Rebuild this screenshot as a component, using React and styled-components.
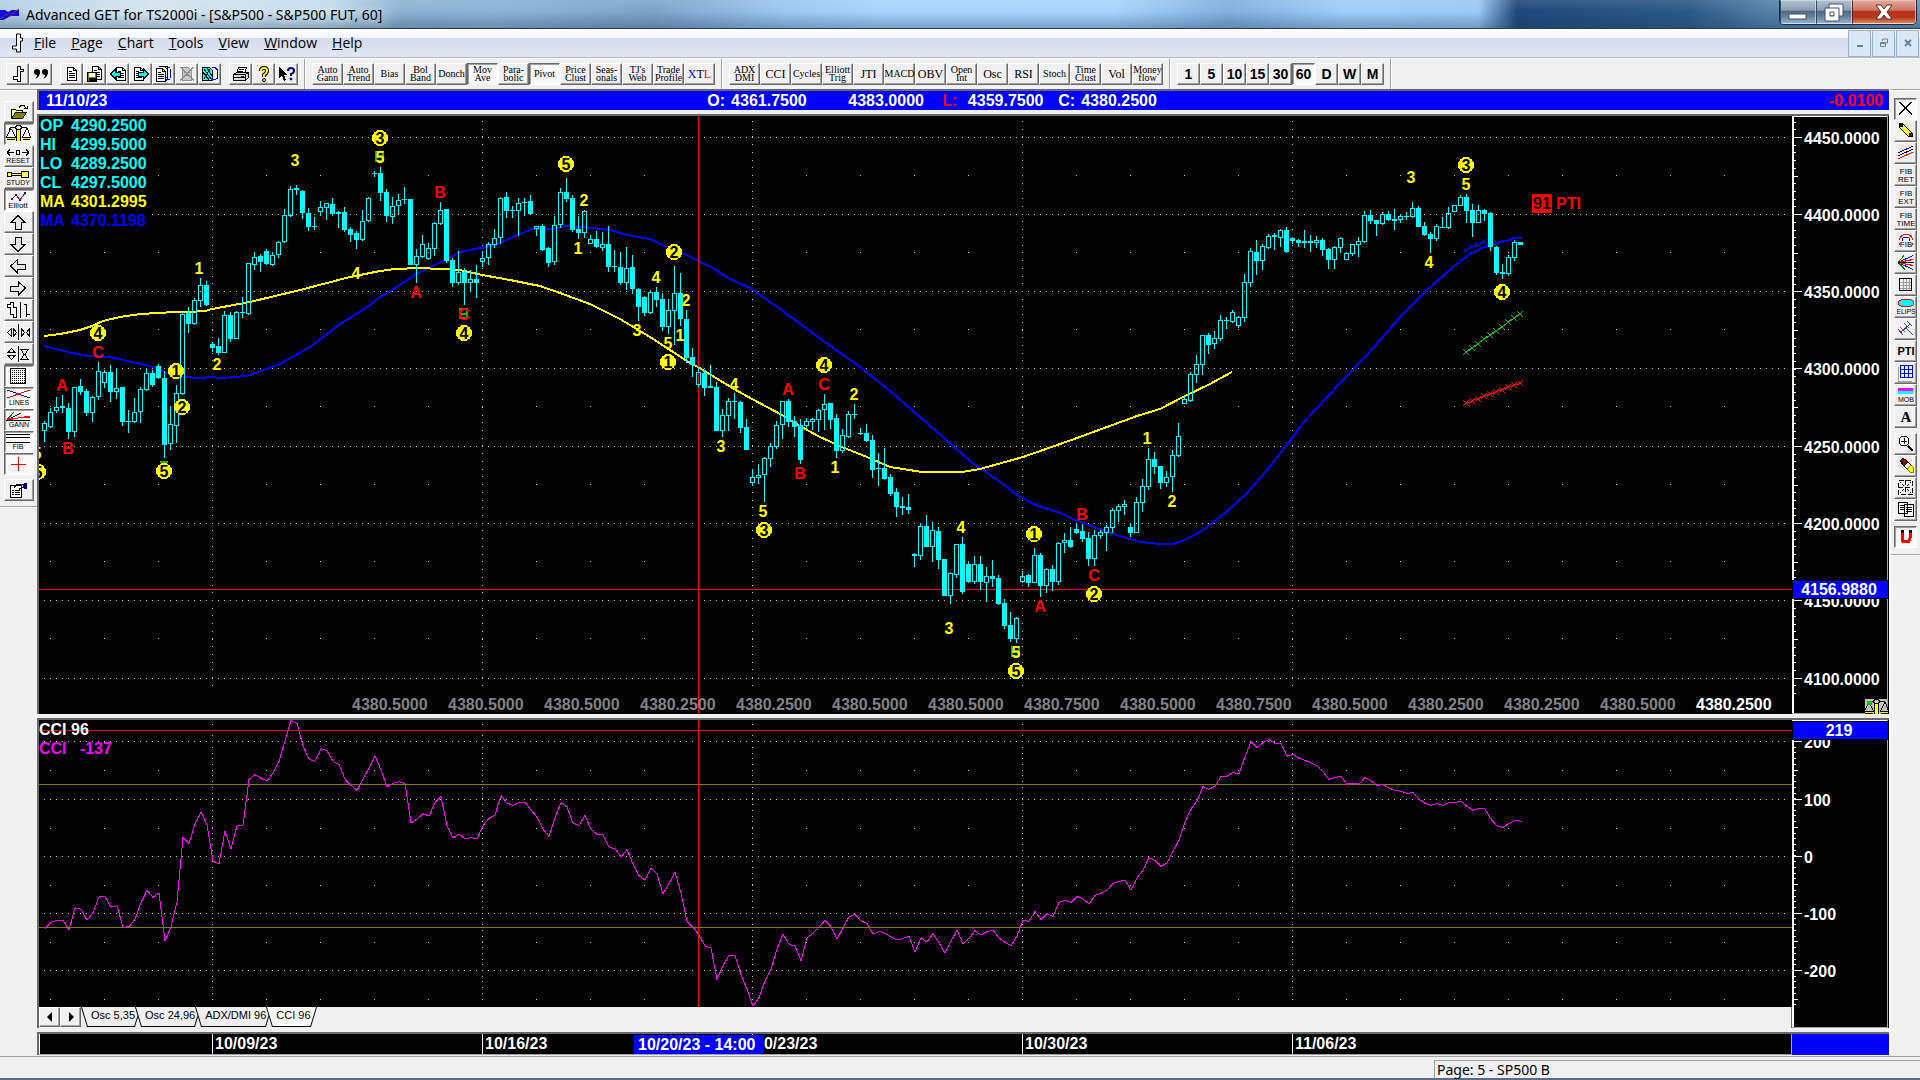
import React from 'react';
import styled, { createGlobalStyle, css } from 'styled-components';

const GlobalStyle = createGlobalStyle`
  * {
    box-sizing: border-box;
  }

  body {
    margin: 0;
    background: #f0f0f0;
    font-family: 'Open Sans', 'Noto Sans', sans-serif;
    color: #000;
  }

  button {
    font: inherit;
    color: inherit;
    margin: 0;
    padding: 0;
    border: 0;
    background: none;
  }
`;

const Page = styled.div`
  display: flex;
  flex-direction: column;
  min-height: 100vh;
  overflow: hidden;
`;

/* ---------- title bar ---------- */

const TitleBar = styled.header`
  display: flex;
  align-items: flex-start;
  height: 29px;
  border-bottom: 1px solid #2b3a4e;
  background:
    linear-gradient(180deg, rgba(255, 255, 255, 0.1) 0%, rgba(255, 255, 255, 0) 40%, rgba(20, 50, 90, 0.3) 100%),
    linear-gradient(
      90deg,
      #b4cfe4 0%,
      #d3e3ee 8%,
      #c4dbec 17%,
      #8fb2d0 21%,
      #8db4d8 26%,
      #7ea3c8 34%,
      #9cc8f2 41%,
      #a8d4fe 46%,
      #a8d4fe 58%,
      #7fb0de 64%,
      #a0cdfa 70%,
      #9cc9f6 77%,
      #20497a 79%,
      #2c5a88 88%,
      #5580a8 92%,
      #6d93b8 100%
    );
`;

const AppLogo = styled.svg`
  width: 20px;
  height: 16px;
  margin: 6px 6px 0 0;
`;

const TitleText = styled.h1`
  flex: 1;
  margin: 0;
  font-family: 'Noto Sans', 'Open Sans', sans-serif;
  font-size: 14px;
  font-weight: 400;
  line-height: 29px;
  white-space: nowrap;
  text-shadow: 0 0 8px #fff;
`;

const WindowButtons = styled.div`
  display: flex;
  height: 25px;
  margin-right: 3px;
  border: 1px solid #1d2c40;
  border-top: 0;
  border-radius: 0 0 5px 5px;
  overflow: hidden;
`;

const WindowButton = styled.button`
  display: flex;
  align-items: center;
  justify-content: center;
  width: ${(p) => (p.$close ? '64px' : '36px')};
  height: 24px;
  border: 1px solid rgba(255, 255, 255, 0.5);
  border-left-color: ${(p) => (p.$close ? '#5b2018' : '#33475e')};
  background: ${(p) =>
    p.$close
      ? 'linear-gradient(180deg, #dfa79b 0%, #cf7565 42%, #b8301a 46%, #b53a1e 75%, #d98559 100%)'
      : 'linear-gradient(180deg, #b3bfcc 0%, #8c9cb0 42%, #51677f 46%, #6b87a5 75%, #93b2d0 100%)'};
`;

/* ---------- menu ---------- */

const MenuBar = styled.nav`
  display: flex;
  align-items: center;
  height: 29px;
  padding-left: 11px;
  border-bottom: 1px solid #b4b8c4;
  background: linear-gradient(180deg, #fff 0%, #f2f4fa 32%, #d5dbec 34%, #e3e7f5 100%);
`;

const MenuIcon = styled.svg`
  width: 12px;
  height: 20px;
  margin-right: 3px;
`;

const MenuItem = styled.button`
  padding: 0 7px 0 8px;
  font-size: 14px;
  line-height: 28px;

  &::first-letter {
    text-decoration: underline;
  }
`;

const MdiButtons = styled.div`
  display: flex;
  gap: 1px;
  margin-left: auto;
  margin-right: 1px;
`;

const MdiButton = styled.button`
  display: flex;
  align-items: center;
  justify-content: center;
  width: 23px;
  height: 27px;
  border: 1px solid #9fb3c8;
  background: #dbe9f6;
`;

/* ---------- toolbars ---------- */

const TopToolbar = styled.div`
  display: flex;
  height: 31px;
  border-top: 1px solid #fff;
  background: #f0f0f0;
`;

const ToolGroup = styled.div`
  display: flex;
  align-items: center;
  margin-right: 1px;
  padding: 0 6px;
  border-right: 1px solid #a0a0a0;
  box-shadow: 1px 0 0 #fff;
`;

const ToolGap = styled.span`
  width: 8px;
  height: 4px;
`;

const raised = css`
  border: 1px solid;
  border-color: #fff #696969 #696969 #fff;
  box-shadow: inset -1px -1px 0 #a0a0a0;
  background: #f0f0f0;
`;

const pressed = css`
  border: 1px solid;
  border-color: #696969 #fff #fff #696969;
  box-shadow: inset 1px 1px 0 #a0a0a0;
  background: #f9f9f9;
`;

const ToolButton = styled.button`
  display: flex;
  flex-direction: column;
  align-items: center;
  justify-content: center;
  width: ${(p) => p.$width || 23}px;
  height: 22px;
  white-space: nowrap;
  ${(p) => (p.$pressed ? pressed : raised)}

  svg {
    display: block;
    flex: none;
  }
`;

const StudyLabel = styled.span`
  font-family: 'Liberation Serif', serif;
  font-size: ${(p) => (p.$small ? 10 : 12)}px;
  line-height: ${(p) => (p.$stacked ? 8 : 12)}px;
  text-align: center;
`;

const PeriodLabel = styled.span`
  font-family: 'Liberation Sans', sans-serif;
  font-size: 14px;
  font-weight: 700;
  line-height: 18px;
`;

const Tint = styled.span`
  color: ${(p) => p.$color};
`;

const Body = styled.main`
  display: flex;
  flex: 1;
`;

const SideBar = styled.aside`
  display: flex;
  flex-direction: column;
  flex: none;
  align-items: center;
  width: ${(p) => (p.$right ? 29 : 37)}px;
  padding-top: ${(p) => (p.$right ? 8 : 11)}px;
  border-top: 1px solid #a0a0a0;
  box-shadow: inset 0 1px 0 #fff;
`;

const SideGroup = styled.div`
  display: flex;
  flex-direction: column;
  margin-bottom: ${(p) => (p.$gap ? 5 : 4)}px;
`;

const SideEnd = styled.hr`
  width: 100%;
  margin: 1px 0 0;
  border: 0;
  border-top: 1px solid #a0a0a0;
  border-bottom: 1px solid #fff;
`;

/* ---------- chart area ---------- */

const Workspace = styled.section`
  display: flex;
  flex: 1;
  flex-direction: column;
  gap: 4px;
  min-width: 0;
  border-right: 2px solid #fff;
  font-family: 'Liberation Sans', sans-serif;
  font-size: 16px;
  font-weight: 700;
`;

const sunken = css`
  border-top: 2px solid #696969;
  border-left: 2px solid #696969;
`;

const InfoBar = styled.div`
  ${sunken}
  display: flex;
  height: 21px;
  padding: 0 6px 0 7px;
  background: #0000ff;
  color: #fff;
  line-height: 19px;
  white-space: nowrap;
`;

const InfoDate = styled.span`
  flex: 0 0 36%;
`;

const Quote = styled.span`
  display: flex;
  gap: 6px;
  width: ${(p) => p.$width}px;
`;

const Change = styled.span`
  margin-left: auto;
  color: #ff0000;
`;

const Pane = styled.div`
  ${sunken}
  display: flex;
  background: #000;
`;

const Plot = styled.div`
  position: relative;
  flex: 1;
  min-width: 0;
  overflow: hidden;
`;

const PlotSvg = styled.svg`
  display: block;
  width: 100%;
  height: ${(p) => p.$height}px;
`;

const Axis = styled.svg`
  flex: none;
  width: 97px;
  height: ${(p) => p.$height}px;
`;

const Legend = styled.dl`
  position: absolute;
  top: 0;
  left: 1px;
  display: grid;
  grid-template-columns: 31px auto;
  margin: 0;
  padding-right: 4px;
  background: #000;
  line-height: 19px;
`;

const LegendName = styled.dt`
  color: ${(p) => p.$color};
`;

const LegendValue = styled.dd`
  margin: 0;
  color: ${(p) => p.$color};
`;

const CciLegend = styled.div`
  position: absolute;
  top: 0;
  left: 0;
  line-height: 19px;
  white-space: pre;
`;

const Tape = styled.div`
  position: absolute;
  right: 20px;
  bottom: 0;
  display: flex;
  gap: 20px;
  line-height: 19px;
  color: #848284;
`;

const TapePrice = styled.span`
  width: 76px;
  color: ${(p) => (p.$last ? '#fff' : 'inherit')};
`;

const TabStrip = styled.div`
  display: flex;
  height: 21px;
  border-right: 1px solid #696969;
  background: #f0f0f0;
  font-size: 11px;
  font-weight: 400;
`;

const ScrollButton = styled.button`
  display: flex;
  align-items: center;
  justify-content: center;
  width: 21px;
  height: 20px;
  ${raised}
`;

const Tabs = styled.div`
  display: flex;
`;

const Tab = styled.button`
  position: relative;
  z-index: 0;
  height: 20px;
  padding: 0 6px 4px 10px;
  margin-right: -6px;
  white-space: nowrap;

  &::before,
  &::after {
    content: '';
    position: absolute;
    z-index: -1;
    top: 0;
    bottom: 0;
    border-bottom: 1px solid #000;
    background: ${(p) => (p.$active ? '#fff' : '#f0f0f0')};
  }

  &::before {
    left: 3px;
    right: 50%;
    border-left: 1px solid #000;
    transform: skewX(17deg);
  }

  &::after {
    left: 35%;
    right: 3px;
    border-right: 1px solid #000;
    transform: skewX(-17deg);
  }
`;

const DateBar = styled.div`
  ${sunken}
  display: flex;
  height: 23px;
  background: #000;
  color: #fff;
`;

const DateTrack = styled.div`
  position: relative;
  display: flex;
  flex: 1;
  overflow: hidden;
  border-left: 1px solid #fff;
  border-right: 1px solid #a0a0a0;
  border-bottom: 1px solid #a0a0a0;
  line-height: 20px;
`;

const DateCell = styled.span`
  flex: none;
  width: ${(p) => (p.$lead ? 172 : 270)}px;
  padding-left: 2px;
  border-left: ${(p) => (p.$lead ? '0' : '1px solid #fff')};
`;

const DateCursor = styled.span`
  position: absolute;
  left: 594px;
  top: 1px;
  width: 130px;
  padding-left: 4px;
  background: #0000ff;
  line-height: 19px;
`;

const DateCorner = styled.div`
  width: 97px;
  background: #0000ff;
`;

const StatusBar = styled.footer`
  display: flex;
  justify-content: flex-end;
  height: 24px;
  padding-top: 3px;
  border-top: 1px solid #a0a0a0;
  border-bottom: 2px solid #5b6c88;
  background: #f0f0f0;
`;

const StatusCell = styled.div`
  width: 486px;
  padding-left: 2px;
  border-top: 1px solid #a0a0a0;
  border-left: 1px solid #a0a0a0;
  font-family: 'Noto Sans', 'Open Sans', sans-serif;
  font-size: 14px;
  line-height: 18px;
`;

/* ---------- data ---------- */

const FIRST_X = 44;
const BAR = 6;
const LEFT = 39;
const PRICE_TOP = 116;
const CCI_TOP = 720;

// high, body top, body bottom, low, 1 = up bar (hollow)
const CANDLES = [
  [421, 423, 431, 442, 1], [408, 412, 427, 428, 1], [397, 407, 411, 413, 1], [395, 406, 408, 413, 0],
  [403, 408, 432, 439, 0], [387, 387, 432, 437, 1], [379, 386, 392, 395, 0], [389, 391, 413, 416, 0],
  [396, 397, 413, 422, 1], [362, 371, 397, 400, 1], [370, 372, 383, 388, 1], [365, 372, 392, 402, 0],
  [368, 388, 392, 399, 1], [387, 387, 422, 426, 0], [410, 421, 422, 433, 0], [398, 412, 422, 423, 1],
  [387, 389, 412, 423, 1], [368, 373, 390, 391, 1], [370, 373, 385, 387, 0], [364, 366, 378, 379, 0],
  [371, 378, 445, 458, 0], [406, 424, 444, 450, 1], [385, 393, 426, 443, 1], [312, 314, 394, 395, 1],
  [307, 313, 324, 333, 0], [298, 300, 324, 325, 1], [278, 285, 301, 307, 1], [281, 285, 305, 306, 0],
  [342, 344, 348, 352, 0], [338, 346, 353, 355, 0], [311, 315, 353, 353, 1], [312, 315, 339, 342, 0],
  [311, 312, 339, 339, 1], [297, 312, 313, 318, 0], [263, 263, 314, 315, 1], [252, 257, 265, 270, 1],
  [254, 256, 262, 272, 0], [249, 251, 264, 265, 0], [252, 255, 265, 266, 1], [241, 242, 255, 258, 1],
  [209, 215, 242, 243, 1], [186, 189, 216, 217, 1], [185, 188, 190, 195, 0], [190, 191, 213, 219, 0],
  [208, 213, 227, 231, 0], [217, 226, 227, 230, 0], [201, 207, 212, 216, 1], [203, 203, 208, 220, 1],
  [198, 204, 214, 216, 0], [211, 212, 214, 228, 0], [207, 212, 230, 232, 0], [227, 229, 235, 242, 0],
  [231, 233, 240, 249, 0], [210, 221, 240, 241, 1], [197, 198, 221, 222, 1], [171, 173, 174, 177, 0],
  [167, 173, 193, 201, 0], [189, 192, 216, 222, 0], [197, 206, 217, 224, 1], [194, 200, 206, 214, 1],
  [187, 199, 200, 204, 0], [199, 199, 265, 265, 0], [249, 256, 265, 283, 1], [235, 244, 257, 258, 1],
  [243, 248, 259, 260, 1], [222, 223, 249, 256, 1], [202, 210, 224, 225, 1], [209, 209, 261, 263, 0],
  [258, 260, 283, 287, 0], [251, 272, 283, 285, 1], [268, 272, 283, 305, 0], [270, 279, 283, 292, 1],
  [265, 279, 283, 298, 0], [251, 258, 262, 267, 1], [242, 244, 258, 265, 1], [229, 238, 245, 248, 1],
  [197, 198, 238, 244, 1], [192, 197, 211, 218, 0], [206, 210, 211, 218, 0], [198, 203, 211, 236, 1],
  [198, 202, 203, 216, 0], [195, 201, 214, 214, 0], [226, 226, 229, 236, 1], [224, 226, 250, 251, 0],
  [247, 248, 263, 267, 0], [216, 225, 262, 265, 1], [188, 192, 225, 228, 1], [178, 192, 199, 202, 0],
  [195, 198, 230, 232, 0], [216, 229, 233, 239, 0], [210, 211, 233, 238, 1], [235, 239, 244, 244, 1],
  [231, 239, 247, 248, 0], [232, 244, 248, 251, 1], [226, 244, 267, 272, 0], [250, 266, 267, 272, 0],
  [252, 267, 283, 285, 0], [247, 268, 283, 290, 1], [255, 267, 289, 294, 0], [288, 289, 307, 321, 0],
  [296, 297, 313, 316, 0], [290, 292, 313, 314, 1], [287, 292, 300, 307, 0], [293, 299, 327, 331, 0],
  [299, 310, 327, 334, 1], [266, 293, 311, 345, 1], [273, 293, 319, 326, 0], [310, 319, 358, 363, 0],
  [348, 357, 365, 377, 0], [367, 372, 385, 387, 1], [370, 373, 388, 396, 0], [365, 386, 388, 388, 0],
  [382, 387, 431, 431, 0], [409, 415, 431, 437, 1], [398, 401, 416, 431, 1], [393, 401, 402, 419, 0],
  [401, 402, 428, 433, 0], [419, 427, 450, 450, 0], [469, 477, 483, 486, 1], [464, 475, 478, 484, 1],
  [457, 458, 475, 502, 1], [443, 446, 459, 467, 1], [421, 425, 447, 449, 1], [401, 401, 425, 439, 1],
  [399, 401, 422, 427, 0], [416, 421, 427, 437, 0], [419, 425, 460, 464, 0], [418, 421, 426, 428, 1],
  [418, 419, 422, 430, 1], [409, 410, 420, 432, 1], [394, 404, 410, 430, 1], [403, 403, 420, 429, 0],
  [414, 418, 451, 458, 0], [429, 435, 451, 453, 1], [411, 414, 437, 438, 1], [404, 414, 415, 419, 0],
  [428, 433, 434, 435, 0], [424, 433, 441, 442, 0], [435, 440, 470, 478, 0], [453, 468, 469, 486, 0],
  [448, 468, 479, 480, 0], [474, 477, 494, 496, 0], [488, 492, 507, 517, 0], [497, 506, 508, 515, 0],
  [494, 507, 510, 514, 0], [553, 554, 556, 567, 0], [523, 526, 556, 560, 1], [515, 526, 547, 547, 0],
  [522, 530, 547, 562, 1], [527, 531, 560, 569, 0], [559, 559, 596, 596, 0], [572, 573, 596, 604, 1],
  [544, 544, 575, 578, 1], [537, 544, 592, 594, 0], [562, 564, 582, 583, 0], [556, 564, 582, 584, 1],
  [556, 564, 582, 590, 0], [567, 576, 583, 602, 1], [560, 576, 579, 587, 0], [575, 578, 604, 605, 0],
  [599, 603, 626, 629, 0], [612, 625, 639, 642, 0], [617, 618, 639, 643, 1], [571, 576, 582, 583, 1],
  [574, 575, 583, 587, 0], [548, 555, 583, 583, 1], [553, 555, 586, 597, 0], [568, 569, 586, 593, 1],
  [565, 569, 582, 591, 0], [542, 543, 582, 585, 1], [533, 540, 543, 553, 1], [527, 540, 547, 548, 0],
  [523, 529, 533, 534, 0], [524, 531, 539, 542, 0], [532, 538, 559, 566, 0], [530, 535, 559, 566, 1],
  [530, 532, 536, 539, 1], [525, 527, 533, 551, 1], [508, 510, 528, 533, 1], [504, 506, 511, 522, 1],
  [500, 504, 507, 515, 1], [524, 527, 533, 537, 0], [497, 502, 533, 533, 1], [479, 486, 503, 512, 1],
  [448, 459, 487, 490, 1], [452, 459, 467, 474, 0], [466, 466, 483, 489, 0], [471, 477, 483, 487, 1],
  [450, 455, 477, 492, 1], [423, 436, 456, 457, 1], [396, 399, 404, 404, 1], [372, 374, 401, 402, 1],
  [355, 364, 375, 383, 1], [335, 335, 365, 375, 1], [333, 335, 345, 354, 0], [331, 338, 344, 349, 1],
  [315, 320, 339, 341, 1], [317, 320, 321, 329, 0], [310, 312, 322, 323, 1], [316, 317, 326, 328, 1],
  [274, 282, 318, 322, 1], [248, 251, 283, 287, 1], [240, 252, 261, 275, 0], [244, 246, 261, 270, 1],
  [234, 236, 248, 249, 1], [233, 235, 237, 250, 0], [229, 230, 238, 247, 1], [227, 230, 252, 253, 0],
  [237, 238, 241, 244, 0], [239, 240, 243, 247, 0], [230, 241, 243, 248, 0], [235, 241, 243, 252, 0],
  [236, 240, 243, 248, 1], [238, 240, 250, 256, 0], [248, 249, 260, 269, 0], [246, 247, 260, 269, 1],
  [237, 238, 248, 253, 1], [253, 253, 260, 260, 1], [244, 244, 254, 256, 1], [237, 241, 245, 257, 1],
  [211, 215, 242, 243, 1], [210, 215, 221, 224, 0], [220, 220, 224, 236, 0], [212, 214, 224, 225, 1],
  [211, 214, 220, 221, 0], [209, 219, 221, 230, 0], [214, 216, 220, 223, 1], [212, 216, 217, 220, 0],
  [202, 208, 217, 218, 1], [206, 208, 227, 227, 0], [222, 226, 235, 236, 0], [232, 234, 239, 253, 0],
  [224, 226, 239, 241, 1], [217, 227, 228, 228, 0], [207, 213, 228, 229, 1], [205, 205, 212, 212, 1],
  [195, 197, 206, 206, 1], [194, 197, 211, 223, 0], [204, 210, 223, 237, 0], [205, 210, 223, 223, 1],
  [209, 210, 214, 221, 0], [212, 213, 247, 251, 0], [246, 247, 273, 275, 0], [264, 272, 274, 279, 0],
  [255, 257, 274, 276, 1], [240, 242, 258, 261, 1], [242, 242, 245, 245, 0],
];

const SLOW_MA =
  '44,336 60,334 80,330 92,326 103,321 120,317 140,314 175,312 190,312 205,311 212,309 250,302 300,290 350,277 380,271 395,269 420,268 460,270 482,275 510,280 540,286 560,293 590,304 620,319 650,337 690,363 698,367 734,389 752,399 782,415 800,426 818,436 842,447 867,457 890,467 922,472 962,472 980,469 1023,457 1043,450 1077,438 1107,427 1137,416 1160,409 1183,397 1210,384 1232,372';

const FAST_MA =
  '44,346 72,353 87,356 110,357 127,361 150,366 167,373 183,377 200,378 212,377 220,378 237,377 250,375 280,364 310,347 340,324 367,307 380,297 397,287 416,274 443,261 460,252 480,248 495,245 513,237 532,229 553,229 565,226 583,227 610,230 627,235 650,239 667,247 683,253 698,261 713,268 728,278 750,288 780,309 822,340 860,367 890,391 920,417 953,446 970,461 1000,482 1017,495 1033,504 1060,513 1073,519 1110,533 1140,542 1160,544 1173,544 1185,540 1203,530 1225,513 1247,493 1267,470 1292,438 1303,423 1340,383 1367,355 1400,317 1427,290 1453,267 1470,254 1485,247 1500,242 1510,240 1513,238 1521,238';

// one reading per bar, in thirds of a pixel below y = 700
const CCI = [
  686, 667, 661, 661, 690, 623, 628, 661, 638, 590, 590, 622, 617, 682, 680, 658, 608, 571, 592, 579,
  724, 680, 605, 412, 430, 372, 335, 375, 484, 492, 392, 447, 377, 376, 238, 224, 235, 243, 219, 184,
  122, 61, 70, 138, 178, 184, 146, 152, 184, 193, 238, 256, 271, 237, 204, 168, 210, 261, 250, 245,
  251, 369, 357, 341, 348, 308, 290, 378, 414, 402, 417, 412, 417, 377, 355, 345, 287, 309, 316, 307,
  307, 330, 352, 388, 409, 353, 308, 321, 370, 376, 347, 388, 403, 404, 442, 446, 471, 449, 492, 527,
  540, 505, 522, 582, 550, 517, 580, 664, 682, 705, 738, 744, 838, 797, 766, 766, 824, 868, 919, 893,
  842, 808, 747, 702, 733, 738, 782, 713, 700, 681, 661, 680, 717, 684, 650, 643, 663, 670, 703, 694,
  700, 711, 720, 715, 709, 757, 713, 726, 701, 728, 760, 723, 690, 732, 715, 692, 705, 695, 691, 714,
  727, 737, 708, 661, 664, 634, 658, 640, 649, 607, 601, 607, 589, 597, 612, 586, 580, 570, 550, 544,
  541, 571, 533, 511, 472, 481, 499, 489, 453, 420, 366, 326, 303, 259, 268, 258, 230, 229, 217, 222,
  170, 125, 142, 128, 119, 130, 131, 169, 163, 175, 181, 189, 198, 216, 238, 232, 229, 253, 249, 253,
  232, 243, 256, 254, 264, 271, 274, 280, 278, 298, 310, 316, 311, 316, 307, 307, 304, 319, 331, 325,
  327, 358, 378, 382, 370, 361, 364,
];

// text, x, y, kind: y = yellow, r = red, c = circled, g = with a green ghost behind it
const WAVES = [
  ['5', 37, 453, 'y'], ['5', 38, 472, 'c'], ['4', 98, 333, 'c'], ['C', 98, 352, 'r'], ['A', 62, 385, 'r'],
  ['B', 68, 448, 'r'], ['5', 164, 471, 'c'], ['1', 176, 371, 'c'], ['2', 182, 407, 'c'], ['1', 199, 268, 'y'],
  ['2', 217, 364, 'y'], ['3', 295, 160, 'y'], ['4', 356, 273, 'y'], ['3', 380, 138, 'c'], ['5', 380, 157, 'yg'],
  ['B', 440, 192, 'r'], ['A', 416, 292, 'r'], ['C', 464, 314, 'rg'], ['4', 464, 333, 'c'], ['5', 566, 164, 'c'],
  ['2', 584, 200, 'y'], ['1', 578, 248, 'y'], ['2', 674, 252, 'c'], ['4', 656, 277, 'y'], ['2', 686, 300, 'y'],
  ['1', 680, 335, 'y'], ['3', 637, 330, 'y'], ['5', 668, 343, 'y'], ['1', 668, 362, 'c'], ['4', 734, 384, 'y'],
  ['3', 721, 446, 'y'], ['5', 763, 511, 'y'], ['3', 764, 530, 'c'], ['A', 788, 389, 'r'], ['C', 824, 384, 'r'],
  ['4', 824, 365, 'c'], ['2', 854, 394, 'y'], ['B', 800, 473, 'r'], ['1', 835, 467, 'y'], ['4', 961, 527, 'y'],
  ['3', 949, 628, 'y'], ['5', 1016, 652, 'yg'], ['5', 1016, 671, 'c'], ['1', 1034, 534, 'c'], ['B', 1082, 514, 'r'],
  ['A', 1040, 606, 'r'], ['C', 1094, 575, 'r'], ['2', 1094, 594, 'c'], ['1', 1147, 438, 'y'], ['2', 1172, 501, 'y'],
  ['3', 1411, 177, 'y'], ['5', 1466, 184, 'y'], ['3', 1466, 165, 'c'], ['4', 1429, 262, 'y'], ['4', 1502, 292, 'c'],
];

const WEEKS = [212, 482, 752, 1022, 1292];
const LEGEND = [
  ['OP', '4290.2500', '#00ffff'],
  ['HI', '4299.5000', '#00ffff'],
  ['LO', '4289.2500', '#00ffff'],
  ['CL', '4297.5000', '#00ffff'],
  ['MA', '4301.2995', '#ffff00'],
  ['MA', '4370.1198', '#0000ff'],
];
const TAPE = [
  '4380.5000', '4380.5000', '4380.5000', '4380.2500', '4380.2500', '4380.5000', '4380.5000', '4380.7500',
  '4380.5000', '4380.7500', '4380.5000', '4380.2500', '4380.2500', '4380.5000', '4380.2500',
];
const PRICE_ROWS = [
  [137, '4450.0000'], [214, '4400.0000'], [291, '4350.0000'], [368, '4300.0000'],
  [446, '4250.0000'], [523, '4200.0000'], [600, '4150.0000'], [678, '4100.0000'],
];
const CCI_ROWS = [[741, '200'], [799, '100'], [856, '0'], [913, '-100'], [970, '-200']];

const range = (n) => Array.from({ length: n }, (_, i) => i);

/* ---------- charts ---------- */

const Grid = ({ rows, half, step, top, bottom }) => (
  <g fill="#c0c0c0" stroke="none">
    {rows.map(([y]) => (
      <line key={y} x1="44" x2="1786" y1={y + 0.5} y2={y + 0.5} stroke="#c0c0c0" strokeDasharray="1 5" />
    ))}
    {WEEKS.map((x) =>
      range(Math.floor((bottom - top) / step)).map((k) => (
        <rect key={`${x}-${k}`} x={x} y={Math.round(top + k * step)} width="1" height="1" />
      ))
    )}
    {rows.map(([y]) =>
      range(32).map((k) => <rect key={`${y}-${k}`} x={50 + k * 54} y={y + half} width="1" height="1" />)
    )}
  </g>
);

const Candle = ({ x, bar }) => {
  const [high, top, bottom, low, up] = bar;
  if (!up || bottom - top < 3) {
    return (
      <g fill="#00ffff">
        <rect x={x} y={high} width="1" height={Math.max(1, low - high)} />
        <rect x={x - 2} y={top} width="5" height={Math.max(1, bottom - top)} />
      </g>
    );
  }
  return (
    <g fill="#00ffff">
      <rect x={x} y={high} width="1" height={top - high} />
      <rect x={x} y={bottom} width="1" height={Math.max(0, low - bottom)} />
      <rect x={x - 1.5} y={top + 0.5} width="4" height={bottom - top - 1} fill="none" stroke="#00ffff" />
    </g>
  );
};

const Wave = ({ wave }) => {
  const [text, x, y, kind] = wave;
  if (kind === 'c') {
    return (
      <g>
        <circle cx={x} cy={y} r="8" fill="#ffff00" />
        <text x={x} y={y + 6}>{text}</text>
      </g>
    );
  }
  return (
    <g>
      {kind.includes('g') && (
        <path d={`M${x - 4} ${y - 5}h7v9h-7zM${x - 4} ${y}h7`} fill="none" stroke="#20b010" strokeWidth="2" />
      )}
      <text x={x} y={y + 6} fill={kind[0] === 'r' ? '#ff0000' : '#ffff00'}>{text}</text>
    </g>
  );
};

const Crosses = ({ x1, y1, y2, n, color }) => (
  <g stroke={color} fill="none">
    <path d={`M${x1} ${y1}L${x1 + (n - 1) * BAR} ${y2}`} />
    {range(n).map((k) => {
      const x = x1 + k * BAR;
      const y = Math.round(y1 + ((y2 - y1) * k) / (n - 1));
      return <path key={k} d={`M${x - 3} ${y - 3}l6 6m0 -6l-6 6`} />;
    })}
  </g>
);

const PriceChart = () => (
  <PlotSvg $height={598} shapeRendering="crispEdges" fontSize="16" textAnchor="middle">
    <g transform={`translate(${-LEFT} ${-PRICE_TOP})`}>
      <Grid rows={PRICE_ROWS} half={38} step={7.725} top={121} bottom={700} />
      <polyline points={FAST_MA} fill="none" stroke="#0000ff" strokeWidth="2" />
      <polyline points={SLOW_MA} fill="none" stroke="#ffff00" strokeWidth="2" />
      <rect x="39" y="589" width="100%" height="1" fill="#ff0000" />
      <rect x="698" y="116" width="1" height="598" fill="#ff0000" />
      {CANDLES.map((bar, i) => (
        <Candle key={i} x={FIRST_X + i * BAR} bar={bar} />
      ))}
      <Crosses x1={1466} y1={250} y2={242} n={4} color="#0000ff" />
      <Crosses x1={1466} y1={352} y2={314} n={10} color="#20b010" />
      <Crosses x1={1466} y1={403} y2={383} n={10} color="#ff0000" />
      <rect x="160" y="461" width="8" height="2" fill="#20b010" />
      {WAVES.map((wave, i) => (
        <Wave key={i} wave={wave} />
      ))}
      <rect x="1532" y="194" width="20" height="19" fill="#ff0000" />
      <text x="1542" y="209">91</text>
      <text x="1556" y="209" fill="#ff0000" textAnchor="start">PTI</text>
    </g>
  </PlotSvg>
);

const CciChart = () => (
  <PlotSvg $height={287} shapeRendering="crispEdges">
    <g transform={`translate(${-LEFT} ${-CCI_TOP})`}>
      <Grid rows={CCI_ROWS} half={29} step={5.72} top={724} bottom={1007} />
      <rect x="39" y="784" width="100%" height="1" fill="#808000" />
      <rect x="39" y="927" width="100%" height="1" fill="#808000" />
      <polyline
        points={CCI.map((v, i) => `${FIRST_X + i * BAR + 1},${700 + v / 3}`).join(' ')}
        fill="none"
        stroke="#ff00ff"
      />
      <rect x="39" y="730" width="100%" height="1" fill="#ff0000" />
      <rect x="698" y="720" width="1" height="287" fill="#ff0000" />
    </g>
  </PlotSvg>
);

const Scale = ({ top, height, rows, step, perRow, first, last, cursor, cursorText, children }) => (
  <Axis $height={height} shapeRendering="crispEdges" fill="#fff" fontSize="16">
    <rect x="0" y="0" width="2" height={height} />
    <rect x="0" y="0" width="96" height="1" />
    <rect x="95" y="0" width="1" height={height - 1} fill="#a0a0a0" />
    <rect x="0" y={height - 1} width="96" height="1" fill="#a0a0a0" />
    {range(Math.round((last - first) / step) + 1).map((k) => {
      const fromRow = Math.round((first + k * step - rows[0][0]) / step);
      const isHalf = Math.abs(fromRow % perRow) === perRow / 2;
      return <rect key={k} x="2" y={Math.round(first + k * step) - top} width={isHalf ? 4 : 2} height="1" />;
    })}
    {rows.map(([y, label]) => (
      <g key={y}>
        <rect x="2" y={y - top} width="8" height="1" />
        <text x="12" y={y - top + 7}>{label}</text>
      </g>
    ))}
    <rect x="0" y={cursor - top - 9} width="97" height="19" fill="#000" />
    <rect x="1" y={cursor - top - 8} width="95" height="17" fill="#0000ff" />
    <text x="47" y={cursor - top + 6} textAnchor="middle">{cursorText}</text>
    {children}
  </Axis>
);

/* ---------- icons ---------- */

const Icon = ({ w = 16, h = 16, children }) => (
  <svg width={w} height={h} viewBox={`0 0 ${w} ${h}`} fill="none" stroke="#000" shapeRendering="crispEdges">
    {children}
  </svg>
);

const BarMark = () => <path d="M7.5 .5h3v3h3v2h-3v10h-3v-2h-4v-3h4z" fill="#fff" />;

const Sheet = ({ x = 0, y = 0 }) => (
  <g transform={`translate(${x} ${y})`}>
    <path d="M.5 .5h6l3 3v10h-9z" fill="#fff" />
    <path d="M6.5 .5v3h3M2 4.5h3M2 6.5h6M2 8.5h6M2 10.5h6" />
  </g>
);

const Scales = () => (
  <g>
    <path d="M11 3v13h3v-13z" fill="#ffff00" stroke="none" />
    <path d="M10.500 5v11M14.500 5v11M9 2.500l2-2h3l2 2M3 4.500l2-2h4l2 2h3l2-2h4l2 2M4.500 4l-4 8M5.500 4l4 8M20.500 4l-4 8M21.500 4l3 8" />
    <path d="M0 12.500h10M1 14.500h8M16 12.500h9M17 14.500h7" />
    <path d="M1 13.500h8M17 13.500h7" stroke="#ffff00" />
  </g>
);

const tiny = { fontFamily: 'Liberation Sans, sans-serif', stroke: 'none', fill: '#000', textAnchor: 'middle' };

const FILE_TOOLS = [
  ['Bars', <Icon><BarMark /></Icon>],
  ['Quotes', <Icon><g fill="#000" shapeRendering="auto" stroke="none"><circle cx="4" cy="6" r="3" /><path d="M7 6q0 5-5 7q3-3 2-6z" /><circle cx="12" cy="6" r="3" /><path d="M15 6q0 5-5 7q3-3 2-6z" /></g></Icon>],
  null,
  ['New page', <Icon><Sheet x={3} y={1} /></Icon>],
  ['Save page', <Icon><Sheet x={5} y={0} /><path d="M.5 6.5h9v9h-9z" fill="#808000" /><path d="M2 6.5h6v4h-6z" fill="#fff" stroke="none" /><path d="M2 12.5h6v3h-6z" fill="#000" /></Icon>],
  ['Previous page', <Icon><Sheet x={6} y={1} /><path d="M.5 8l5-5v3h5v4h-5v3z" fill="#00ffff" /></Icon>],
  ['Next page', <Icon><Sheet x={1} y={1} /><path d="M15.5 8l-5-5v3h-5v4h5v3z" fill="#00ffff" /></Icon>],
  ['Cycle pages', <Icon><Sheet x={0} y={2} /><path d="M3 .5h8v13M10 2.5h2" /><path d="M14.5 3v9M12 1.5h2M9 13.5h5M11 11l-2 2 2 2M10 1l-1 1" stroke="#0000ff" /></Icon>],
  ['Delete page', <Icon><g stroke="#909090"><path d="M3.5 1.5h6l3 3v10h-9z" fill="#c8c8c8" /><path d="M1 1l14 14M15 1l-14 14M2 1l13 13M1 14l13-13M5 6.5h6M5 9.5h6" /></g></Icon>],
  ['Cycle charts', <Icon><path d="M.5 1.5h7l3 3v10h-10z" fill="#00ffff" /><path d="M2 3l7 10M5 2l5 8M1 6l6 8M8 3l-6 10" /><path d="M10 1.5h3l2 2v9l-2 1h-3M11 11l-2 2 2 2" stroke="#0000ff" /></Icon>],
  null,
  ['Print', <Icon><path d="M5.5 1.5h8l-2 6h-8z" fill="#fff" /><path d="M6 3.5h5M5 5.5h5" /><path d="M.5 8.5l3-2h12v5l-3 3h-12z" fill="#d8d8d8" /><path d="M.5 8.5h12v6M12.5 8.5l3-2M1 11.5h11M8 10.5h3" /></Icon>],
  ['Help', <Icon><g shapeRendering="auto"><path d="M5 5q0-3 3-3t3 3q0 2-3 4v2" strokeWidth="4" /><path d="M5 5q0-3 3-3t3 3q0 2-3 4v2" stroke="#ffff00" strokeWidth="2" /><circle cx="8" cy="14" r="1.5" fill="#ffff00" /></g></Icon>],
  ['Context help', <Icon><path d="M0 1v11l3-2 2 5 2-1-2-5h4z" fill="#000" stroke="none" /><g shapeRendering="auto"><path d="M9 5q0-3 3-3t3 3q0 2-3 3v2" stroke="#000080" strokeWidth="2" /><circle cx="12" cy="13" r="1" stroke="#000080" fill="#000080" /></g></Icon>],
];

const STUDY_TOOLS = [
  [['Auto', 'Gann']], [['Auto', 'Trend']], [['Bias'], 'small'], [['Bol', 'Band']], [['Donch'], 'small'],
  [['Mov', 'Ave'], 'on'], [['Para-', 'bolic']], [['Pivot'], 'on small'], [['Price', 'Clust']],
  [['Seas-', 'onals']], [["TJ's", 'Web']], [['Trade', 'Profile']], [['XTL'], 'xtl'],
];
const INDICATOR_TOOLS = [
  [['ADX', 'DMI']], [['CCI']], [['Cycles'], 'small'], [['Elliott', 'Trig']], [['JTI']], [['MACD'], 'small'],
  [['OBV']], [['Open', 'Int']], [['Osc']], [['RSI']], [['Stoch'], 'small'], [['Time', 'Clust']], [['Vol']],
  [['Money', 'flow']],
];
const PERIODS = ['1', '5', '10', '15', '30', '60', 'D', 'W', 'M'];

const LEFT_TOOLS = [
  ['Open', 0, <><path d="M5.500 15.500v-9h4l1 1h6v2" fill="#ffff80" /><path d="M5.500 15.500l4-6h11l-4 6z" fill="#808000" /><path d="M13 4.500l2-2h3l2 3M18 5.500h3v-3" /></>],
  ['Scales', 1, <Scales />],
  ['Reset', 0, <><path d="M1 5.500h7M1 5.500l3-3M1 5.500l3 3M16 5.500h7M23 5.500l-3-3M23 5.500l-3 3M10.500 3.500h3v4h-3z" /><text x="12" y="16" fontSize="7" {...tiny}>RESET</text></>],
  ['Study', 0, <><path d="M1.500 3.500h4v4h-4zM5.500 4.500h10v2h-10zM15.500 2.500h7v6h-7z" fill="#ffff40" /><text x="12" y="16" fontSize="7" {...tiny}>STUDY</text></>],
  ['Elliott', 1, <><path d="M6 8l4-4 4 5 5-7" stroke="#ff0000" /><path d="M5 7h2v2h-2zM9 3h2v2h-2zM13 8h2v2h-2zM18 1h2v2h-2z" fill="#0000ff" stroke="none" /><text x="12" y="17" fontSize="8" {...tiny}>Elliott</text></>],
  ['Up', 0, <path d="M12 2.500l7 7h-4v7h-6v-7h-4z" fill="#e4e4e4" />],
  ['Down', 0, <path d="M12 16.500l7-7h-4v-7h-6v7h-4z" fill="#e4e4e4" />],
  ['Left', 0, <path d="M4.500 9l7-6v4h8v5h-8v4z" fill="#e4e4e4" />],
  ['Right', 0, <path d="M19.500 9l-7-6v4h-8v5h8v4z" fill="#e4e4e4" />],
  ['Bar style', 0, <><path d="M1.500 3.500h3v-2h3v5h3v10h-3v-3h-3v-7h-3z" fill="#fff" /><path d="M14.500 1v16M18 3.500h3M20.500 3v13M21 13.500h3" /></>],
  ['Bar spacing', 0, <path d="M12.500 1v16M5.500 5.500l-4 4 4 4zM7.500 5.500l3 4-3 4zM15.500 5.500l3 4-3 4zM23.500 5.500l-3 4 3 4z" />],
  ['Bar height', 0, <path d="M12.500 1v16M2 7.500h7l-3.500-4zM2 10.500h7l-3.500 4zM15 4.500h7l-3 5 3 5h-7l3-5z" />],
  ['Grid', 1, <><rect x="4.500" y="1.500" width="15" height="15" fill="#fff" />{range(7).map((k) => <path key={k} d={`M6 ${3.5 + k * 2}h13`} strokeDasharray="1 1" />)}</>],
  ['Lines', 1, <><path d="M1 1l23 8" stroke="#0000ff" /><path d="M1 9l23-8" stroke="#ff0000" /><text x="13" y="16" fontSize="7" {...tiny}>LINES</text></>],
  ['Gann', 1, <><path d="M1 9l7-8" stroke="#008000" /><path d="M1 9l14-7" stroke="#0000ff" /><path d="M1 9l23-4M1 8l23-2" stroke="#ff0000" /><path d="M0 9.500h24" /><text x="13" y="16" fontSize="7" {...tiny}>GANN</text></>],
  ['Fibonacci', 1, <><path d="M0 1.500h24M0 4.500h24M0 9.500h24" /><text x="12" y="16" fontSize="7" {...tiny}>FIB</text></>],
  ['Crosshair', 1, <path d="M12.500 2v14M5 9h15M12 2v14M5 9.500h15" stroke="#ff0000" />],
];

const PROPERTIES = (
  <>
    <path d="M4.500 4.500h11v12h-11z" fill="#fff" />
    <path d="M6 9.500h2M9 9.500h5M6 11.500h2M9 11.500h5M6 13.500h2M9 13.500h5M8 6.500l3-3h6v3l-3 1-1 2" />
    <rect x="18" y="2" width="3" height="6" fill="#000080" stroke="none" />
  </>
);

const fibText = (a, b) => (
  <>
    <text x="9" y="8" fontSize="8" {...tiny}>{a}</text>
    <text x="9" y="16" fontSize="8" {...tiny}>{b}</text>
  </>
);

const RIGHT_TOOLS = [
  ['Pointer', 1, <path d="M2 2l13 13M15 2l-13 13M3 2l12 12M14 2l-12 12" />],
  ['Pencil', 0, <><path d="M2 2l3-1 10 10-1 3-3 0-9-9z" fill="#ffff00" /><path d="M2 1h3l1 3-2 1-2-1z" fill="#000" /><path d="M12 11l3 0v3h-3z" fill="#800000" /></>],
  ['Channel', 0, <><path d="M1 9l15-7" stroke="#0000ff" /><path d="M1 12l15-7" /><path d="M1 15l15-7" stroke="#ff0000" /></>],
  ['Fib retracement', 0, fibText('FIB', 'RET')],
  ['Fib extension', 0, fibText('FIB', 'EXT')],
  ['Fib time', 0, fibText('FIB', 'TIME')],
  ['Fib arcs', 0, <><path d="M3 13a7 7 0 1 1 12 0" stroke="#ff0000" /><path d="M5 9a4 4 0 0 1 8 0" stroke="#0000ff" /><text x="9" y="15" fontSize="8" {...tiny}>FIB</text></>],
  ['Fan', 0, <><path d="M1 8.500l6-7M1 8.500l7 7" stroke="#008000" /><path d="M1 8.500l15-7M1 8.500l15 7" stroke="#0000ff" /><path d="M1 8.500l15-3M1 8.500l15 3" stroke="#ff0000" /><path d="M1 8.500h16" /></>],
  ['Box', 0, <><path d="M6.500 3v11M9.500 3v11M12.500 3v11M3 6.500h12M3 9.500h12M3 12.500h12" stroke="#a0a0a0" /><rect x="2.500" y="2.500" width="12" height="12" /></>],
  ['Ellipse', 0, <><ellipse cx="9" cy="5" rx="8" ry="4" fill="#00ffff" stroke="#ff0000" /><text x="9" y="16" fontSize="7" {...tiny}>ELiPS</text></>],
  ['Pitchfork', 0, <><path d="M1 9l5 6M10 1l5 5M4 12l9-8M9 8l7 7" stroke="#404080" /><path d="M3 7l5 5" stroke="#c04040" /><path d="M7 3l5 5" stroke="#208020" /></>],
  ['PTI', 0, <text x="9" y="13" fontSize="11" fontWeight="700" {...tiny}>PTI</text>],
  ['Grid lines', 0, <><path d="M1.500 3v14h13" stroke="#a0a0a0" /><path d="M3.500 1.500h12v12h-12zM7.500 2v12M11.500 2v12M3 5.500h13M3 9.500h13" stroke="#0000ff" /></>],
  ['MOB', 0, <><path d="M1 2h15v3h-15z" fill="#ff00ff" stroke="none" /><path d="M1 5h15v3h-15z" fill="#00ffff" stroke="none" /><text x="9" y="16" fontSize="7" {...tiny}>MOB</text></>],
  ['Text', 0, <text x="9" y="14" fontSize="15" fontWeight="700" {...tiny} fontFamily="Liberation Serif, serif">A</text>],
];

const VIEW_TOOLS = [
  ['Zoom', 0, <><circle cx="7" cy="6" r="5" fill="#fff" /><path d="M4 6.500h6M7.500 3v6M11 10l5 5M10 11l5 5M11 11l5 5" /></>],
  ['Eraser', 0, <><path d="M3 4l3-3 5 4-4 4z" fill="#800000" /><path d="M7 9l4-4 3 3-4 4z" fill="#fff" /><path d="M10 12l4-4 2 2v5h-3z" fill="#ffff00" stroke="#808000" /></>],
  ['Arrange', 0, <><path d="M1.500 1.500h14v14h-14zM8.500 1v14M1 8.500h14" strokeDasharray="5 2" /><path d="M3 3l4 4M14 3l-4 4M3 14l4-4M14 14l-4-4" strokeDasharray="2 1" /></>],
  ['Copy', 0, <><path d="M1.500 1.500h9v11h-9zM7.500 3.500h9v12h-9z" fill="#fff" /><path d="M3 4.500h4M3 6.500h4M3 8.500h4M9 6.500h6M9 8.500h6M9 10.500h6" /></>],
];

const MAGNET = (
  <>
    <path d="M5 5v5q0 4 4 4t4-4v-5" stroke="#ff0000" strokeWidth="3" />
    <path d="M5 2v3M13 2v3" strokeWidth="3" />
  </>
);

const TextTool = ({ lines, flags = '' }) => {
  const small = lines.length > 1 || flags.includes('small');
  if (flags === 'xtl') {
    return (
      <ToolButton $width={31}>
        <StudyLabel>
          <Tint $color="#0000ff">X</Tint>T<Tint $color="#ff0000">L</Tint>
        </StudyLabel>
      </ToolButton>
    );
  }
  return (
    <ToolButton $width={31} $pressed={flags.includes('on')}>
      {lines.map((line) => (
        <StudyLabel key={line} $small={small} $stacked={lines.length > 1}>{line}</StudyLabel>
      ))}
    </ToolButton>
  );
};

const SideTools = ({ tools, width, iconWidth }) =>
  tools.map(([name, on, art]) => (
    <ToolButton key={name} aria-label={name} $width={width} $pressed={on === 1}>
      <Icon w={iconWidth} h={18}>{art}</Icon>
    </ToolButton>
  ));

const App = () => (
  <Page>
    <GlobalStyle />

    <TitleBar>
      <AppLogo viewBox="0 0 20 16">
        <path d="M0 4h5l3 2 4-2h7v6h-8l-4 2-4 2H0z" fill="#0000e0" />
        <path d="M1 13l5-5 3 3 5-5 5-3" stroke="#d01030" fill="none" />
      </AppLogo>
      <TitleText>Advanced GET for TS2000i - [S&amp;P500 - S&amp;P500 FUT, 60]</TitleText>
      <WindowButtons>
        <WindowButton aria-label="Minimize">
          <svg width="20" height="20"><rect x="1" y="12" width="17" height="5" fill="#fff" stroke="#40506a" /></svg>
        </WindowButton>
        <WindowButton aria-label="Restore">
          <svg width="22" height="20" fill="#fff" stroke="#40506a">
            <path d="M6 2h14v12h-14z" />
            <path d="M2 6h14v13h-14zM7 10h4v4h-4z" fillRule="evenodd" />
          </svg>
        </WindowButton>
        <WindowButton $close aria-label="Close">
          <svg width="20" height="18"><path d="M2 2h5l3 4 3-4h5l-5 7 5 7h-5l-3-4-3 4h-5l5-7z" fill="#fff" stroke="#503038" /></svg>
        </WindowButton>
      </WindowButtons>
    </TitleBar>

    <MenuBar>
      <MenuIcon viewBox="2 -1 12 20">
        <path d="M7.500 0h4v4h2v3h-2v11h-4v-3h-4v-3h4z" fill="#fff" stroke="#000" />
      </MenuIcon>
      {['File', 'Page', 'Chart', 'Tools', 'View', 'Window', 'Help'].map((item) => (
        <MenuItem key={item}>{item}</MenuItem>
      ))}
      <MdiButtons>
        <MdiButton aria-label="Minimize chart">
          <svg width="10" height="10"><rect x="2" y="7" width="6" height="2" fill="#6a7f98" /></svg>
        </MdiButton>
        <MdiButton aria-label="Restore chart">
          <svg width="10" height="10" fill="none" stroke="#6a7f98"><path d="M3.500 3v-2h5v4h-2M1.500 4.500h5v4h-5zM1 5.500h6" /></svg>
        </MdiButton>
        <MdiButton aria-label="Close chart">
          <svg width="10" height="10"><path d="M2 2l6 6M8 2l-6 6" stroke="#6a7f98" strokeWidth="2" /></svg>
        </MdiButton>
      </MdiButtons>
    </MenuBar>

    <TopToolbar>
      <ToolGroup>
        {FILE_TOOLS.map((tool, i) =>
          tool ? <ToolButton key={i} aria-label={tool[0]}>{tool[1]}</ToolButton> : <ToolGap key={i} />
        )}
      </ToolGroup>
      <ToolGroup>
        {STUDY_TOOLS.map(([lines, flags]) => <TextTool key={lines.join()} lines={lines} flags={flags} />)}
      </ToolGroup>
      <ToolGroup>
        {INDICATOR_TOOLS.map(([lines, flags]) => <TextTool key={lines.join()} lines={lines} flags={flags} />)}
      </ToolGroup>
      <ToolGroup>
        {PERIODS.map((period) => (
          <ToolButton key={period} $pressed={period === '60'}>
            <PeriodLabel>{period}</PeriodLabel>
          </ToolButton>
        ))}
      </ToolGroup>
    </TopToolbar>

    <Body>
      <SideBar>
        <SideGroup>
          <SideTools tools={LEFT_TOOLS} width={30} iconWidth={25} />
        </SideGroup>
        <SideGroup>
          <ToolButton aria-label="Properties" $width={30}>
            <Icon w={25} h={18}>{PROPERTIES}</Icon>
          </ToolButton>
        </SideGroup>
        <SideEnd />
      </SideBar>

      <Workspace>
        <InfoBar>
          <InfoDate>11/10/23</InfoDate>
          <Quote $width={141}><span>O:</span><span>4361.7500</span></Quote>
          <Quote $width={94}><span>4383.0000</span></Quote>
          <Quote $width={116}><Tint $color="#ff0000">L:</Tint><span>&nbsp;4359.7500</span></Quote>
          <Quote $width={110}><span>C:</span><span>4380.2500</span></Quote>
          <Change>-0.0100</Change>
        </InfoBar>

        <Pane>
          <Plot>
            <PriceChart />
            <Legend>
              {LEGEND.map(([name, value, color]) => (
                <React.Fragment key={value}>
                  <LegendName $color={color}>{name}</LegendName>
                  <LegendValue $color={color}>{value}</LegendValue>
                </React.Fragment>
              ))}
            </Legend>
            <Tape>
              {TAPE.map((price, i) => (
                <TapePrice key={i} $last={i === TAPE.length - 1}>{price}</TapePrice>
              ))}
            </Tape>
          </Plot>
          <Scale
            top={PRICE_TOP} height={598} rows={PRICE_ROWS} step={7.725} perRow={10}
            first={121.5} last={694} cursor={589} cursorText="4156.9880"
          >
            <g transform="translate(73 583)" fill="none" stroke="#000">
              <rect x="0" y="0" width="22" height="15" fill="#c0c0c0" stroke="none" />
              <g transform="translate(-1 0)"><Scales /></g>
              <rect x="2" y="2" width="5" height="4" fill="#20c010" stroke="none" />
            </g>
          </Scale>
        </Pane>

        <Pane>
          <Plot>
            <CciChart />
            <CciLegend>
              <div><Tint $color="#fff">CCI 96</Tint></div>
              <div><Tint $color="#ff00ff">{'CCI   -137'}</Tint></div>
            </CciLegend>
            <TabStrip>
              <ScrollButton aria-label="Previous tab"><svg width="6" height="10"><path d="M5 0v10l-5-5z" /></svg></ScrollButton>
              <ScrollButton aria-label="Next tab"><svg width="6" height="10"><path d="M1 0v10l5-5z" /></svg></ScrollButton>
              <Tabs>
                <Tab>Osc 5,35</Tab>
                <Tab>Osc 24,96</Tab>
                <Tab>ADX/DMI 96</Tab>
                <Tab $active>CCI 96</Tab>
              </Tabs>
            </TabStrip>
          </Plot>
          <Scale
            top={CCI_TOP} height={308} rows={CCI_ROWS} step={5.725} perRow={10}
            first={746.7} last={1006} cursor={730} cursorText="219"
          />
        </Pane>

        <DateBar>
          <DateTrack>
            <DateCell $lead />
            <DateCell>10/09/23</DateCell>
            <DateCell>10/16/23</DateCell>
            <DateCell>10/23/23</DateCell>
            <DateCell>10/30/23</DateCell>
            <DateCell>11/06/23</DateCell>
            <DateCursor>10/20/23 - 14:00</DateCursor>
          </DateTrack>
          <DateCorner />
        </DateBar>
      </Workspace>

      <SideBar $right>
        <SideGroup $gap>
          <SideTools tools={RIGHT_TOOLS} width={23} iconWidth={18} />
        </SideGroup>
        <SideGroup $gap>
          <SideTools tools={VIEW_TOOLS} width={23} iconWidth={18} />
        </SideGroup>
        <SideGroup $gap>
          <ToolButton aria-label="Magnet" $pressed>
            <Icon w={18} h={18}>{MAGNET}</Icon>
          </ToolButton>
        </SideGroup>
        <SideEnd />
      </SideBar>
    </Body>

    <StatusBar>
      <StatusCell>Page: 5 - SP500 B</StatusCell>
    </StatusBar>
  </Page>
);

export default App;
